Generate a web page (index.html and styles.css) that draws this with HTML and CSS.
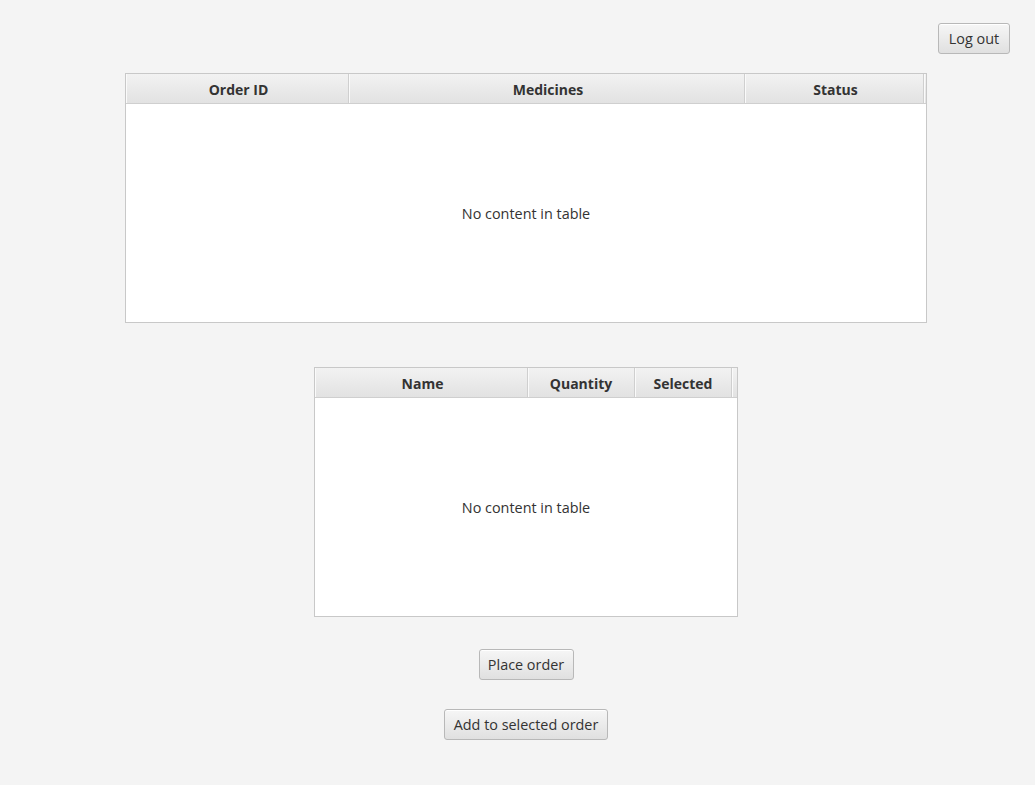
FILE: index.html
```html
<!DOCTYPE html>
<html>
<head>
<meta charset="utf-8">
<link rel="stylesheet" href="styles.css">
</head>
<body>
<div class="page">
  <div class="topbar">
    <button class="btn logout">Log out</button>
  </div>
  <div class="content">
    <div class="table orders">
      <div class="thead">
        <div class="th c-id">Order ID</div>
        <div class="th c-med">Medicines</div>
        <div class="th c-status">Status</div>
        <div class="th filler f1"></div>
      </div>
      <div class="tbody">No content in table</div>
    </div>
    <div class="table items">
      <div class="thead">
        <div class="th c-name">Name</div>
        <div class="th c-qty">Quantity</div>
        <div class="th c-sel">Selected</div>
        <div class="th filler f2"></div>
      </div>
      <div class="tbody">No content in table</div>
    </div>
    <button class="btn place">Place order</button>
    <button class="btn add">Add to selected order</button>
  </div>
</div>
</body>
</html>
```
FILE: styles.css
```css
html, body {
  margin: 0;
  padding: 0;
  background: #f4f4f4;
}
body {
  font-family: "Open Sans", "Noto Sans", sans-serif;
  font-size: 13px;
  color: #333333;
}
.page {
  width: 1035px;
  height: 785px;
}
.topbar {
  display: flex;
  justify-content: flex-end;
  padding: 23px 25px 0 0;
  height: 31px;
}
.content {
  display: flex;
  flex-direction: column;
  align-items: center;
  padding-left: 17px;
  padding-top: 19px;
}
.btn {
  font-family: inherit;
  font-size: 14.4px;
  color: #333333;
  height: 31px;
  padding: 0;
  border: 1px solid #b8b8b8;
  border-radius: 3px;
  background: linear-gradient(#f6f6f6, #e0e0e0);
  box-shadow: inset 0 1px 0 #ffffff;
  line-height: 27px;
}
.logout {
  width: 72px;
}
.table {
  box-sizing: border-box;
  height: 250px;
  border: 1px solid #c8c8c8;
  background: #ffffff;
  display: flex;
  flex-direction: column;
}
.orders { width: 802px; }
.items { width: 424px; margin-top: 44px; }
.thead {
  display: flex;
  height: 30px;
  border-bottom: 1px solid #cfcfcf;
  box-sizing: border-box;
  background: linear-gradient(#f2f2f2, #e2e2e2);
}
.th {
  box-sizing: border-box;
  height: 100%;
  display: flex;
  align-items: center;
  justify-content: center;
  font-weight: bold;
  font-size: 14px;
  padding-top: 2px;
  border-right: 1px solid #cfcfcf;
  box-shadow: inset 1px 0 0 #fafafa;
}
.c-id { width: 223px; padding-left: 3px; }
.c-med { width: 396px; padding-left: 3px; }
.c-status { width: 179px; padding-left: 3px; }
.f1 { width: 2px; border-right: none; }
.c-name { width: 213px; padding-left: 3px; }
.c-qty { width: 107px; }
.c-sel { width: 97px; }
.f2 { width: 5px; border-right: none; }
.tbody {
  flex: 1;
  display: flex;
  align-items: center;
  justify-content: center;
  font-size: 14.4px;
}
.place {
  margin-top: 32px;
  width: 95px;
}
.add {
  margin-top: 29px;
  width: 164px;
}
```
